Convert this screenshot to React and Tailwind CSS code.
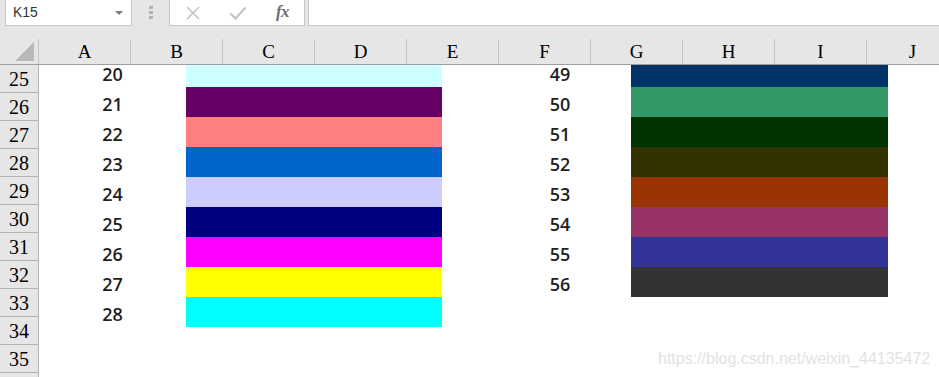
import React from "react";

const leftRows = [
  { n: 20, c: "#CCFFFF" },
  { n: 21, c: "#660066" },
  { n: 22, c: "#FF8080" },
  { n: 23, c: "#0066CC" },
  { n: 24, c: "#CCCCFF" },
  { n: 25, c: "#000080" },
  { n: 26, c: "#FF00FF" },
  { n: 27, c: "#FFFF00" },
  { n: 28, c: "#00FFFF" },
];

const rightRows = [
  { n: 49, c: "#003366" },
  { n: 50, c: "#339966" },
  { n: 51, c: "#003300" },
  { n: 52, c: "#333300" },
  { n: 53, c: "#993300" },
  { n: 54, c: "#993366" },
  { n: 55, c: "#333399" },
  { n: 56, c: "#333333" },
];

const cols = ["A", "B", "C", "D", "E", "F", "G", "H", "I", "J"];
const rowNums = [25, 26, 27, 28, 29, 30, 31, 32, 33, 34, 35, ""];

function Toolbar() {
  return (
    <div className="flex h-[26px] items-stretch">
      {/* name box */}
      <div className="ml-[5px] w-[127px] bg-white border border-t-0 border-[#c6c6c6] flex items-center justify-between pl-[7px] pr-[8px]">
        <span className="text-[14px] text-[#333] font-['Liberation_Sans',sans-serif]">K15</span>
        <span className="w-0 h-0 border-l-[4px] border-r-[4px] border-t-[4px] border-l-transparent border-r-transparent border-t-[#7a7a7a]" />
      </div>
      {/* grip dots */}
      <div className="w-[37px] flex flex-col items-center justify-center gap-[2px] pb-[2px]">
        <span className="w-[4px] h-[3px] bg-[#b3b3b3]" />
        <span className="w-[4px] h-[3px] bg-[#b3b3b3]" />
        <span className="w-[4px] h-[3px] bg-[#b3b3b3]" />
      </div>
      {/* formula buttons */}
      <div className="w-[136px] bg-white border border-t-0 border-[#c6c6c6] flex items-center">
        <div className="w-[45px] flex justify-center pl-[1px]">
          <svg width="14" height="14" viewBox="0 0 14 14">
            <path d="M1 1 L13 13 M13 1 L1 13" stroke="#c3c3c3" strokeWidth="1.6" fill="none" />
          </svg>
        </div>
        <div className="w-[46px] flex justify-center">
          <svg width="18" height="14" viewBox="0 0 18 14">
            <path d="M1.5 7.5 L6.5 12.5 L16.5 1.5" stroke="#c3c3c3" strokeWidth="2.2" fill="none" />
          </svg>
        </div>
        <div className="flex-1 flex justify-center pb-[2px]">
          <span className="italic font-bold text-[17px] text-[#6f6f6f] font-['Liberation_Serif',serif] tracking-[-0.5px]">fx</span>
        </div>
      </div>
      {/* formula input */}
      <div className="ml-[3px] flex-1 bg-white border border-t-0 border-r-0 border-[#c6c6c6]" />
    </div>
  );
}

function ColumnHeader() {
  return (
    <div className="flex h-[27px] border-b border-[#9e9e9e] overflow-hidden">
      <div className="w-[39px] shrink-0 flex items-end justify-end pr-[4px] pb-[3px] border-r border-[#c4c4c4] mt-[1px]">
        <svg width="19" height="19" viewBox="0 0 19 19">
          <path d="M19 0 L19 19 L0 19 Z" fill="#b9b9b9" />
        </svg>
      </div>
      {cols.map((c) => (
        <div
          key={c}
          className="w-[92px] shrink-0 border-r border-[#c4c4c4] mt-[1px] flex items-center justify-center pt-[1px] text-[19px] text-black font-['Liberation_Serif',serif]"
        >
          {c}
        </div>
      ))}
    </div>
  );
}

function RowHeader() {
  return (
    <div className="w-[39px] shrink-0 border-r border-[#b4b4b4] flex flex-col">
      {rowNums.map((r, i) => (
        <div
          key={i}
          className="h-[28px] shrink-0 border-b border-[#b4b4b4] flex items-center justify-center pt-[1px] text-[20px] text-black font-['Liberation_Serif',serif]"
        >
          {r}
        </div>
      ))}
    </div>
  );
}

// first row (25) is partly hidden under the column header, so it is shorter
function NumCell({ n, first }) {
  return first ? (
    <div className="h-[22px] flex items-center justify-center pb-[4px]">{n}</div>
  ) : (
    <div className="h-[30px] flex items-center justify-center pt-[3px]">{n}</div>
  );
}

function DataArea() {
  return (
    <div className="relative flex-1 bg-white overflow-hidden">
      <div className="flex font-['Open_Sans',sans-serif] text-[18px] leading-[18px] font-semibold text-[#1f1f1f]">
        <div className="w-[147px] shrink-0 flex flex-col">
          {leftRows.map((r, i) => (
            <NumCell key={r.n} n={r.n} first={i === 0} />
          ))}
        </div>
        <div className="w-[256px] shrink-0 flex flex-col">
          {leftRows.map((r, i) => (
            <div key={r.n} className={i === 0 ? "h-[22px]" : "h-[30px]"} style={{ backgroundColor: r.c }} />
          ))}
        </div>
        <div className="w-[189px] shrink-0 flex flex-col pl-[47px]">
          {rightRows.map((r, i) => (
            <NumCell key={r.n} n={r.n} first={i === 0} />
          ))}
        </div>
        <div className="w-[257px] shrink-0 flex flex-col">
          {rightRows.map((r, i) => (
            <div key={r.n} className={i === 0 ? "h-[22px]" : "h-[30px]"} style={{ backgroundColor: r.c }} />
          ))}
        </div>
      </div>
      <div className="absolute left-[619px] top-[282px] text-[16px] text-[#e2e2e2] font-['Liberation_Sans',sans-serif]">
        https://blog.csdn.net/weixin_44135472
      </div>
    </div>
  );
}

export default function App() {
  return (
    <div className="w-[939px] h-[377px] overflow-hidden bg-[#e6e6e6] flex flex-col">
      <Toolbar />
      <div className="h-[12px] shrink-0" />
      <ColumnHeader />
      <div className="flex flex-1 overflow-hidden">
        <RowHeader />
        <DataArea />
      </div>
    </div>
  );
}
